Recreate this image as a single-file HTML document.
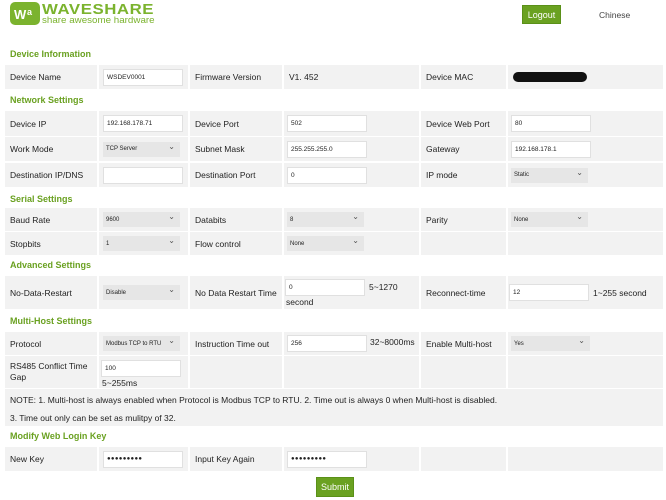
<!DOCTYPE html>
<html><head><meta charset="utf-8"><style>
*{margin:0;padding:0;box-sizing:border-box}
body{width:666px;height:500px;background:#fff;font-family:"Liberation Sans",Arial,sans-serif;font-size:8.5px;color:#222;position:relative;overflow:hidden}
.a{position:absolute}
.h{position:absolute;left:10px;font-weight:bold;color:#6aa121;font-size:9px}
.row{position:absolute;left:5px;width:658px}
.c{position:absolute;top:0;bottom:0;background:#f2f2f2;display:flex;align-items:center;padding-left:5px}
.c1{left:0;width:92px}.c2{left:94px;width:89px}.c3{left:185px;width:92px}.c4{left:279px;width:135px}.c5{left:416px;width:85px}.c6{left:503px;width:155px}
.in{background:#fff;border:1px solid #e0e0e0;width:80px;height:17px;font-size:6.5px;display:flex;align-items:center;padding-left:3px}
.sel{background:#e6e6e6;width:77px;height:15px;font-size:6px;display:flex;align-items:center;padding-left:3px;position:relative}
.sel:after{content:"⌄";position:absolute;right:5px;top:0px;font-size:8px;color:#555}
.c2 .in,.c2 .sel{margin-left:-1px}
.c4 .in,.c6 .in,.c4 .sel,.c6 .sel{margin-left:-2px}
.btn{position:absolute;background:#6aa121;color:#fff;font-size:9px;display:flex;align-items:center;justify-content:center;border:1px solid #5a9018}
.pw{font-size:6px;letter-spacing:0.3px}
</style></head><body>
<svg class="a" style="left:10px;top:2px" width="32" height="24" viewBox="0 0 32 24"><rect x="0" y="0" width="30" height="23" rx="5" fill="#7bb32e"/><text x="4" y="17" font-family="Liberation Sans" font-weight="bold" font-size="13" fill="#fff">W</text><text x="17" y="13" font-family="Liberation Sans" font-weight="bold" font-size="9" fill="#fff">a</text></svg>
<div class="a" style="left:42px;top:1px;color:#7bb32e;font-size:15px;font-weight:bold;letter-spacing:0.5px;transform:scaleX(1.12);transform-origin:left">WAVESHARE</div>
<div class="a" style="left:42px;top:15px;color:#7bb32e;font-size:9.5px;transform:scaleX(1.03);transform-origin:left">share awesome hardware</div>
<div class="btn" style="left:522px;top:5px;width:39px;height:19px">Logout</div>
<div class="a" style="left:599px;top:10px;font-size:8.5px;color:#444">Chinese</div>

<div class="h" style="top:49px">Device Information</div>
<div class="row" style="top:65px;height:24px">
<div class="c c1">Device Name</div><div class="c c2"><div class="in">WSDEV0001</div></div><div class="c c3">Firmware Version</div><div class="c c4">V1. 452</div><div class="c c5">Device MAC</div><div class="c c6"><div style="width:74px;height:10px;background:#111;border-radius:5px"></div></div></div>

<div class="h" style="top:95px">Network Settings</div>
<div class="row" style="top:111px;height:25px">
<div class="c c1">Device IP</div><div class="c c2"><div class="in">192.168.178.71</div></div><div class="c c3">Device Port</div><div class="c c4"><div class="in">502</div></div><div class="c c5">Device Web Port</div><div class="c c6"><div class="in">80</div></div></div>
<div class="row" style="top:137px;height:24px">
<div class="c c1">Work Mode</div><div class="c c2"><div class="sel">TCP Server</div></div><div class="c c3">Subnet Mask</div><div class="c c4"><div class="in">255.255.255.0</div></div><div class="c c5">Gateway</div><div class="c c6"><div class="in">192.168.178.1</div></div></div>
<div class="row" style="top:163px;height:24px">
<div class="c c1">Destination IP/DNS</div><div class="c c2"><div class="in"></div></div><div class="c c3">Destination Port</div><div class="c c4"><div class="in">0</div></div><div class="c c5">IP mode</div><div class="c c6"><div class="sel">Static</div></div></div>

<div class="h" style="top:194px">Serial Settings</div>
<div class="row" style="top:208px;height:23px">
<div class="c c1">Baud Rate</div><div class="c c2"><div class="sel">9600</div></div><div class="c c3">Databits</div><div class="c c4"><div class="sel">8</div></div><div class="c c5">Parity</div><div class="c c6"><div class="sel">None</div></div></div>
<div class="row" style="top:232px;height:23px">
<div class="c c1">Stopbits</div><div class="c c2"><div class="sel">1</div></div><div class="c c3">Flow control</div><div class="c c4"><div class="sel">None</div></div><div class="c c5"></div><div class="c c6"></div></div>

<div class="h" style="top:260px">Advanced Settings</div>
<div class="row" style="top:276px;height:33px">
<div class="c c1">No-Data-Restart</div><div class="c c2"><div class="sel">Disable</div></div><div class="c c3">No Data Restart Time</div><div class="c c4"></div><div class="c c5">Reconnect-time</div><div class="c c6"></div></div>
<div class="in a" style="left:285px;top:279px">0</div>
<div class="a" style="left:369px;top:282px">5~1270</div>
<div class="a" style="left:286px;top:297px">second</div>
<div class="in a" style="left:509px;top:284px">12</div>
<div class="a" style="left:593px;top:288px">1~255 second</div>

<div class="h" style="top:316px">Multi-Host Settings</div>
<div class="row" style="top:332px;height:23px">
<div class="c c1">Protocol</div><div class="c c2"><div class="sel">Modbus TCP to RTU</div></div><div class="c c3">Instruction Time out</div><div class="c c4"><div class="in">256</div><span style="margin-left:3px;margin-top:-3px">32~8000ms</span></div><div class="c c5">Enable Multi-host</div><div class="c c6"><div class="sel" style="width:79px">Yes</div></div></div>
<div class="row" style="top:356px;height:32px">
<div class="c c1" style="align-items:flex-start;padding-top:5px;line-height:11px">RS485 Conflict Time<br>Gap</div><div class="c c2"></div><div class="c c3"></div><div class="c c4"></div><div class="c c5"></div><div class="c c6"></div></div>
<div class="in a" style="left:101px;top:360px">100</div>
<div class="a" style="left:102px;top:378px">5~255ms</div>
<div class="row" style="top:389px;height:21px"><div class="c" style="left:0;width:658px">NOTE: 1. Multi-host is always enabled when Protocol is Modbus TCP to RTU. 2. Time out is always 0 when Multi-host is disabled.</div></div>
<div class="row" style="top:410px;height:16px"><div class="c" style="left:0;width:658px">3. Time out only can be set as mulitpy of 32.</div></div>

<div class="h" style="top:431px">Modify Web Login Key</div>
<div class="row" style="top:447px;height:24px">
<div class="c c1">New Key</div><div class="c c2"><div class="in pw">●●●●●●●●●</div></div><div class="c c3">Input Key Again</div><div class="c c4"><div class="in pw">●●●●●●●●●</div></div><div class="c c5"></div><div class="c c6"></div></div>
<div class="btn" style="left:316px;top:477px;width:38px;height:20px">Submit</div>
</body></html>
